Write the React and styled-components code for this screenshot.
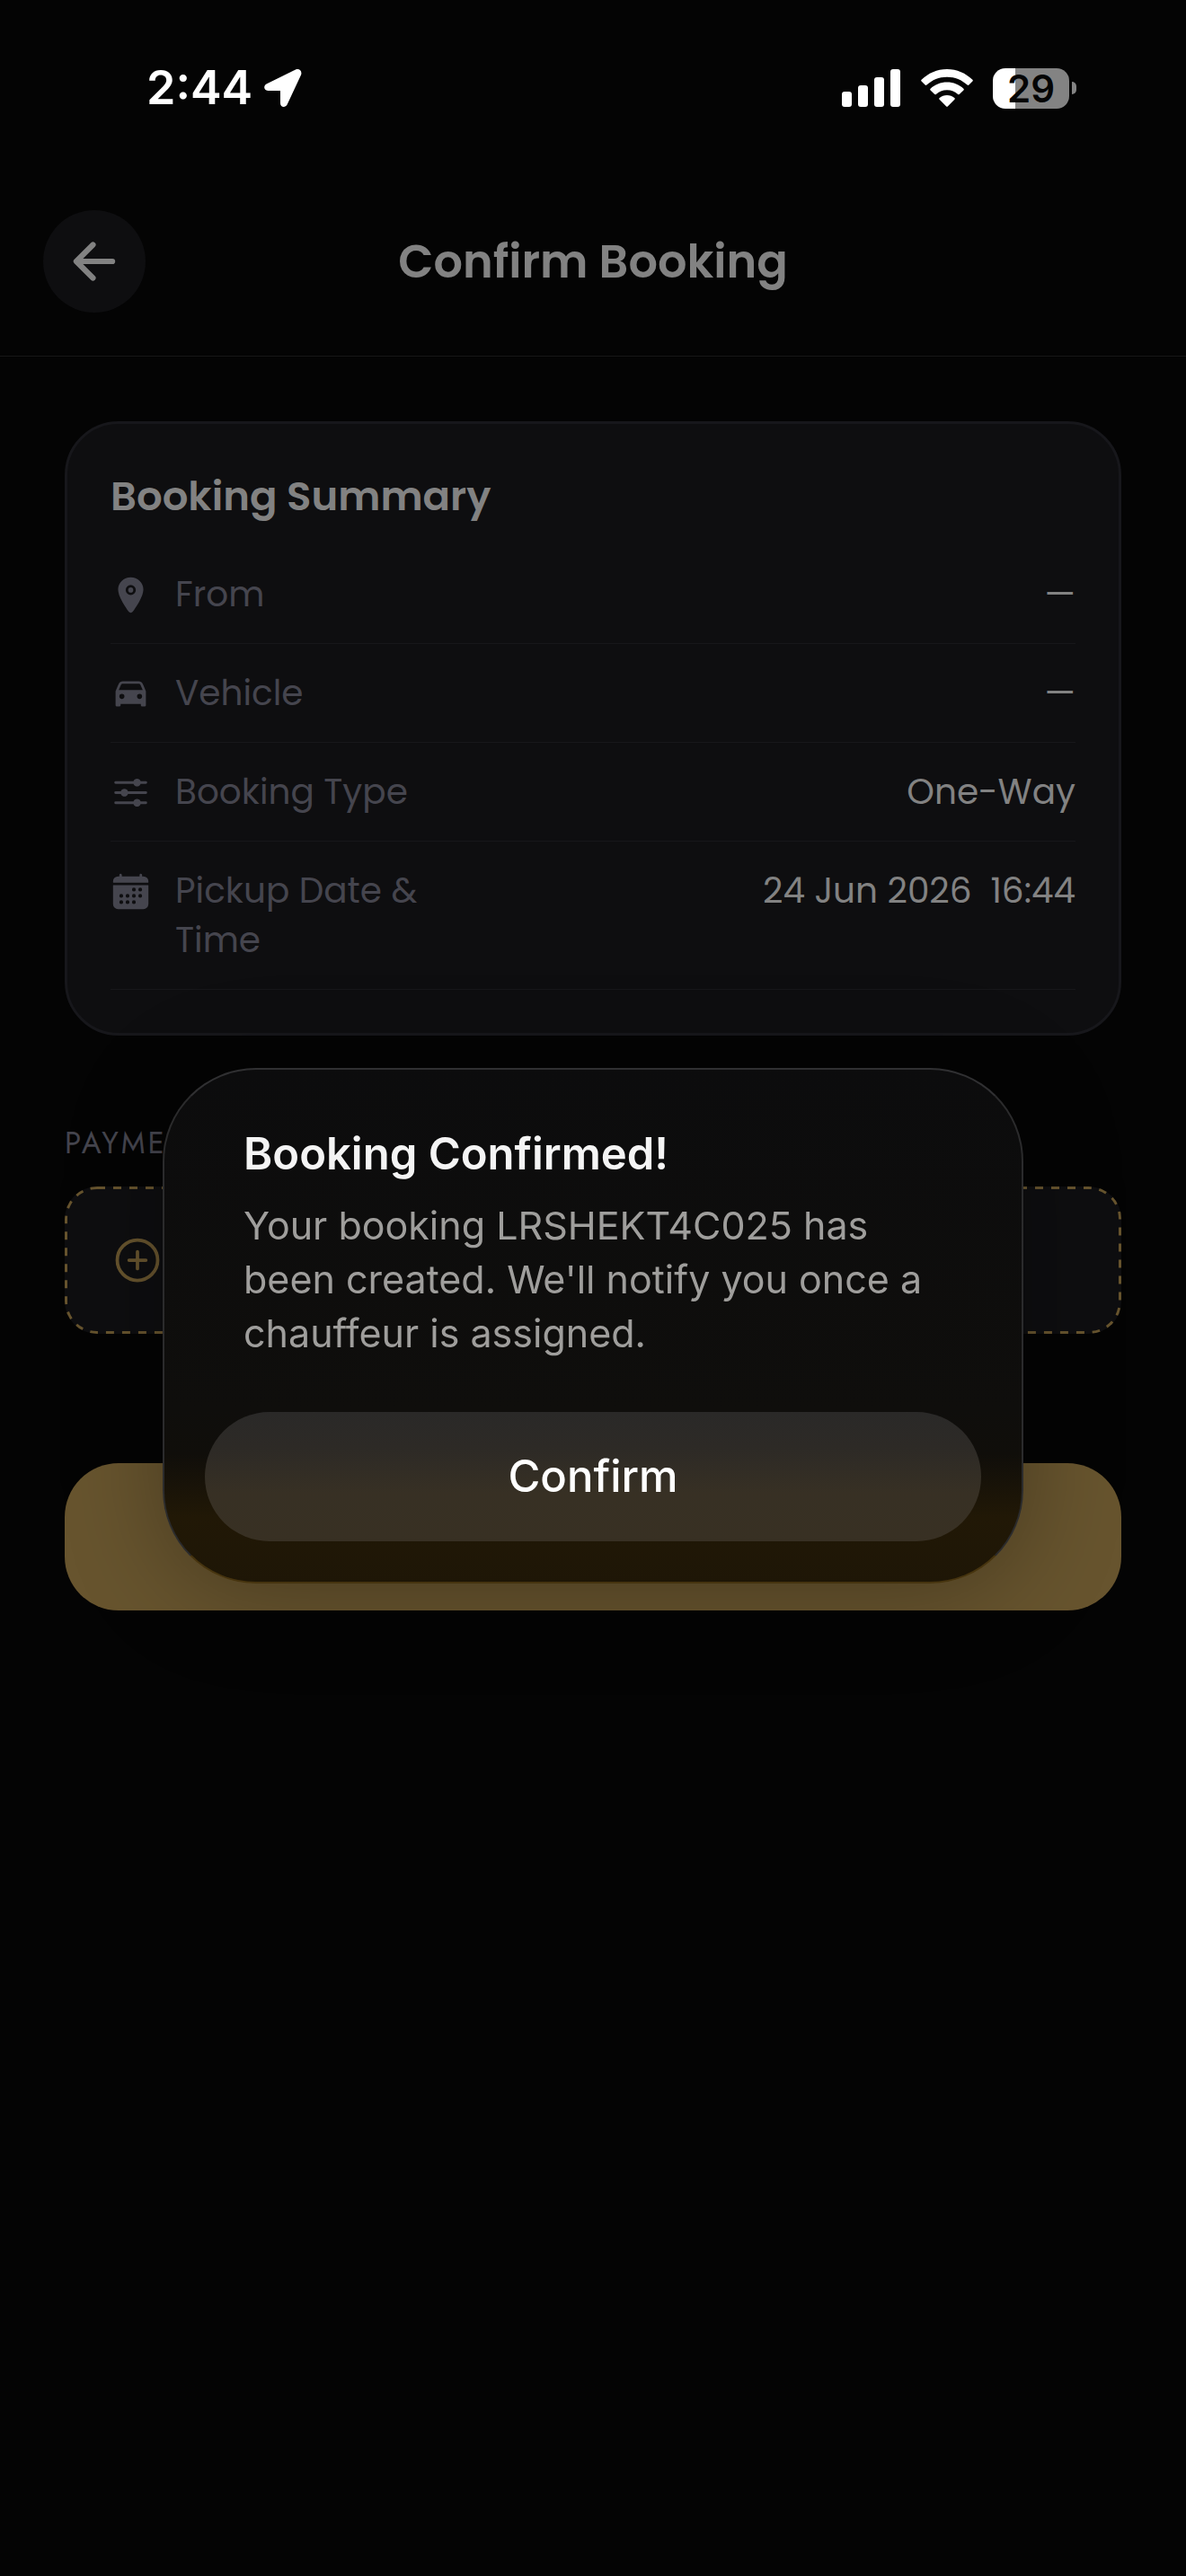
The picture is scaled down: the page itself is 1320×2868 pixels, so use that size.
import React from 'react';
import styled, { createGlobalStyle } from 'styled-components';
import {
  IoAddCircleOutline,
  IoArrowBack,
  IoCalendar,
  IoCar,
  IoLocation,
  IoOptions,
} from 'react-icons/io5';

const GlobalStyle = createGlobalStyle`
  * {
    box-sizing: border-box;
  }
  body {
    margin: 0;
    background: #040404;
    font-family: Poppins, Inter, sans-serif;
  }
  button {
    padding: 0;
    border: 0;
    font: inherit;
    cursor: pointer;
  }
`;

const Screen = styled.div`
  display: flex;
  flex-direction: column;
  min-height: 100vh;
`;

const StatusBar = styled.div`
  display: flex;
  justify-content: space-between;
  align-items: center;
  height: 186px;
  padding: 10px 122px 0 163px;
  color: white;
`;

const Clock = styled.div`
  display: flex;
  align-items: center;
  gap: 12px;
  font-family: Inter, sans-serif;
  font-size: 52px;
  font-weight: 600;
  line-height: 60px;
`;

const Indicators = styled.div`
  display: flex;
  align-items: center;
  gap: 22px;
`;

const BatteryWrap = styled.div`
  display: flex;
  align-items: center;
  gap: 3px;
`;

const Battery = styled.div`
  width: 85px;
  height: 45px;
  border-radius: 14px;
  background: linear-gradient(90deg, white 25px, #838383 25px);
  color: #050505;
  font-family: Inter, sans-serif;
  font-size: 42px;
  font-weight: 600;
  line-height: 45px;
  text-align: center;
`;

const BatteryTip = styled.div`
  width: 5px;
  height: 14px;
  border-radius: 0 7px 7px 0;
  background: #838383;
`;

const Header = styled.header`
  display: grid;
  grid-template-columns: 114px 1fr 114px;
  align-items: center;
  padding: 48px;
  border-bottom: 1px solid #171717;
`;

const BackButton = styled.button`
  display: flex;
  justify-content: center;
  align-items: center;
  height: 114px;
  border-radius: 50%;
  background: #0e0e10;
  color: #828282;
  font-size: 66px;
`;

const PageTitle = styled.h1`
  margin: 0;
  color: #828282;
  font-size: 51px;
  font-weight: 600;
  line-height: 72px;
  text-align: center;
`;

const Content = styled.main`
  display: flex;
  flex-direction: column;
  padding: 72px;
`;

const Card = styled.section`
  padding: 48px;
  border: 3px solid #17171b;
  border-radius: 60px;
  background: #0e0e10;
`;

const CardTitle = styled.h2`
  margin: 0 0 22px;
  color: #828282;
  font-size: 45px;
  font-weight: 600;
  line-height: 65px;
`;

const Rows = styled.dl`
  margin: 0;
`;

const Row = styled.div`
  display: flex;
  align-items: flex-start;
  padding: 27px 0;
  border-bottom: 1px solid #17171a;
  font-size: 39px;
  line-height: 55px;
  svg {
    width: 45px;
    height: 45px;
    margin: 6px 27px 0 0;
    color: #45454e;
  }
`;

const Label = styled.dt`
  width: 300px;
  color: #45454e;
`;

const Value = styled.dd`
  flex: 1;
  margin: 0;
  color: #828282;
  text-align: right;
  white-space: pre;
`;

const SectionLabel = styled.h3`
  margin: 96px 0 24px;
  color: #45454e;
  font-family: Jost, Lato, sans-serif;
  font-size: 33px;
  font-weight: 400;
  letter-spacing: 3px;
  line-height: 48px;
`;

const AddPayment = styled.button`
  position: relative;
  display: flex;
  align-items: center;
  height: 164px;
  padding: 0 51px;
  border-radius: 36px;
  background: #0e0e10;
  color: #67542e;
  font-size: 60px;
  overflow: hidden;
`;

// outer half of the stroke is clipped by the button, leaving a 3px dash
const DashedOutline = styled.svg`
  position: absolute;
  inset: 0;
  width: 100%;
  height: 100%;
`;

const BookButton = styled.button`
  height: 164px;
  margin-top: 144px;
  border-radius: 60px;
  background: #67542e;
`;

const Overlay = styled.div`
  position: fixed;
  inset: 0;
  display: flex;
  justify-content: center;
  align-items: center;
  padding-top: 83px;
`;

const Dialog = styled.div`
  width: 958px;
  max-width: 90%;
  padding: 61px 45px 45px;
  border: 2px solid;
  border-color: #303032 #2b2b2c #46340f;
  border-radius: 104px;
  background: linear-gradient(#0c0c0d, #0f0e0c 380px, #100e0a 430px, #211806 500px, #1e1606);
  background-origin: border-box;
  box-shadow: 0 10px 110px rgba(0, 0, 0, 0.3);
  font-family: Inter, sans-serif;
`;

const DialogText = styled.div`
  padding: 0 43px;
`;

const DialogTitle = styled.h2`
  margin: 0;
  color: #f4f4f4;
  font-size: 49px;
  font-weight: 600;
  line-height: 66px;
`;

const Message = styled.p`
  margin: 16px 0 58px;
  color: #9f9e9c;
  font-size: 43px;
  line-height: 60px;
`;

const ConfirmButton = styled.button`
  width: 100%;
  height: 144px;
  border-radius: 72px;
  background: linear-gradient(#2a2928, #2d2a26 40px, #373024 90px, #383023);
  color: white;
  && {
    font-size: 49px;
    font-weight: 500;
  }
`;

const LocationArrow = () => (
  <svg width="44" height="44" viewBox="0 0 44 44" fill="currentColor" aria-hidden="true">
    <path d="M36 1.600 4 17.200C-0.200 19.300 0.400 24.800 5.200 24.900H19V39C19.100 43.600 24.600 44.400 26.700 40.200L42 7.400C43.700 3.400 40 -0.300 36 1.600Z" />
  </svg>
);

const SignalIcon = () => (
  <svg width="66" height="42" viewBox="0 0 66 42" fill="currentColor" aria-hidden="true">
    <rect x="0" y="25" width="11" height="17" rx="3" />
    <rect x="18" y="18" width="11" height="24" rx="3" />
    <rect x="36" y="9" width="11" height="33" rx="3" />
    <rect x="54" y="0" width="11" height="42" rx="3" />
  </svg>
);

const WifiIcon = () => (
  <svg width="58" height="42" viewBox="0 0 58 42" fill="currentColor" aria-hidden="true">
    <path d="M29 0C18 0 8 4.500 0.600 11.800C0 12.400 0 13 0.600 13.600L4.600 17.600C5.200 18.200 5.800 18.200 6.400 17.600C12.400 12 20.200 8.700 29 8.700S45.600 12 51.600 17.600C52.200 18.200 52.800 18.200 53.400 17.600L57.400 13.600C58 13 58 12.400 57.400 11.800C50 4.500 40 0 29 0Z" />
    <path d="M29 14.600C21.800 14.600 15.400 17.300 10.600 21.700C10 22.300 10 22.800 10.600 23.400L15 27.800C15.600 28.400 16.200 28.400 16.800 27.900C20 25 24.200 23.300 29 23.300S38 25 41.200 27.900C41.800 28.400 42.400 28.400 43 27.800L47.400 23.400C48 22.800 48 22.300 47.400 21.700C42.600 17.300 36.200 14.600 29 14.600Z" />
    <path d="M29 29C25.800 29 22.900 30.100 20.700 32C20 32.600 20 33.100 20.600 33.700L28 41.300C28.700 42 29.300 42 30 41.300L37.400 33.700C38 33.100 38 32.600 37.300 32C35.100 30.100 32.200 29 29 29Z" />
  </svg>
);

const summary = [
  { label: 'From', value: '—', Icon: IoLocation },
  { label: 'Vehicle', value: '—', Icon: IoCar },
  { label: 'Booking Type', value: 'One-Way', Icon: IoOptions },
  { label: 'Pickup Date & Time', value: '24 Jun 2026  16:44', Icon: IoCalendar },
];

const App = () => {
  return (
    <>
      <GlobalStyle />
      <Screen>
        <StatusBar>
          <Clock>
            2:44
            <LocationArrow />
          </Clock>
          <Indicators>
            <SignalIcon />
            <WifiIcon />
            <BatteryWrap>
              <Battery>29</Battery>
              <BatteryTip />
            </BatteryWrap>
          </Indicators>
        </StatusBar>
        <Header>
          <BackButton type="button" aria-label="Back">
            <IoArrowBack />
          </BackButton>
          <PageTitle>Confirm Booking</PageTitle>
        </Header>
        <Content>
          <Card>
            <CardTitle>Booking Summary</CardTitle>
            <Rows>
              {summary.map(({ label, value, Icon }) => (
                <Row key={label}>
                  <Icon aria-hidden="true" />
                  <Label>{label}</Label>
                  <Value>{value}</Value>
                </Row>
              ))}
            </Rows>
          </Card>
          <SectionLabel>PAYMENT</SectionLabel>
          <AddPayment type="button" aria-label="Add payment method">
            <DashedOutline aria-hidden="true">
              <rect
                width="100%"
                height="100%"
                rx="36"
                fill="none"
                stroke="currentColor"
                strokeWidth="6"
                strokeDasharray="9 9"
              />
            </DashedOutline>
            <IoAddCircleOutline />
          </AddPayment>
          <BookButton type="button" aria-label="Confirm Booking" />
        </Content>
      </Screen>
      <Overlay>
        <Dialog role="alertdialog" aria-labelledby="dialog-title" aria-describedby="dialog-message">
          <DialogText>
            <DialogTitle id="dialog-title">Booking Confirmed!</DialogTitle>
            <Message id="dialog-message">
              Your booking LRSHEKT4C025 has been created. We'll notify you once a chauffeur is
              assigned.
            </Message>
          </DialogText>
          <ConfirmButton type="button">Confirm</ConfirmButton>
        </Dialog>
      </Overlay>
    </>
  );
};

export default App;
